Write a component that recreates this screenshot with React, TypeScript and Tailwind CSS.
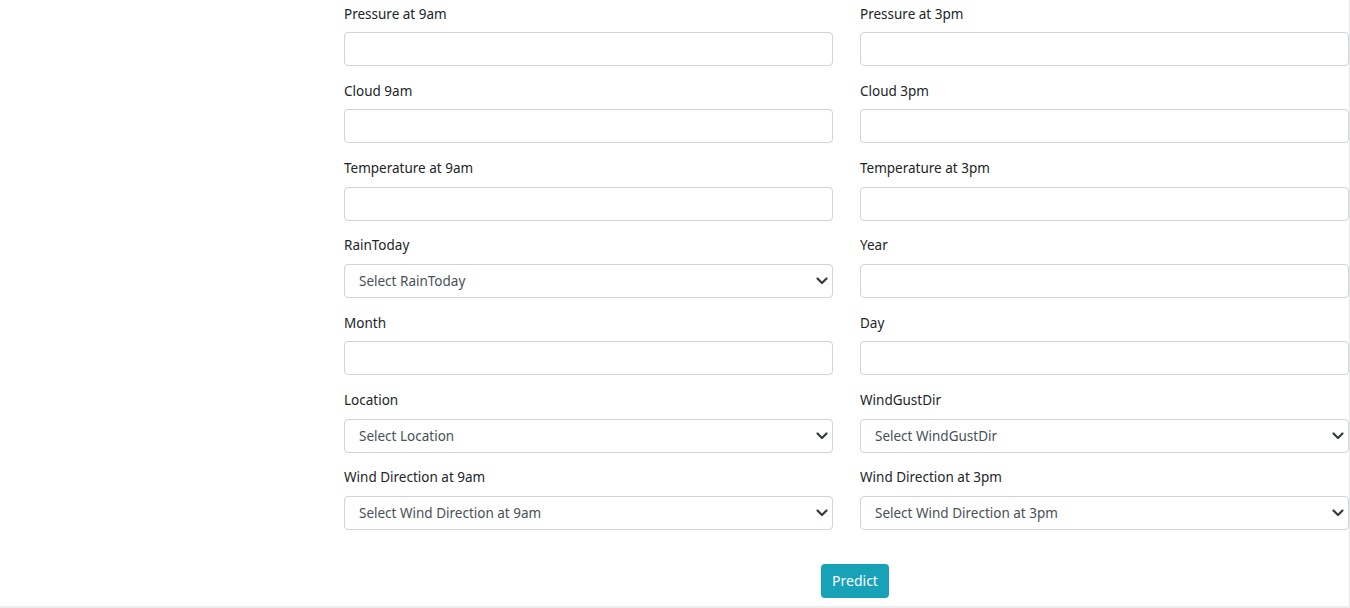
import React from "react";

type Field = { label: string; select?: string };

const rows: [Field, Field][] = [
  [{ label: "Pressure at 9am" }, { label: "Pressure at 3pm" }],
  [{ label: "Cloud 9am" }, { label: "Cloud 3pm" }],
  [{ label: "Temperature at 9am" }, { label: "Temperature at 3pm" }],
  [{ label: "RainToday", select: "Select RainToday" }, { label: "Year" }],
  [{ label: "Month" }, { label: "Day" }],
  [
    { label: "Location", select: "Select Location" },
    { label: "WindGustDir", select: "Select WindGustDir" },
  ],
  [
    { label: "Wind Direction at 9am", select: "Select Wind Direction at 9am" },
    { label: "Wind Direction at 3pm", select: "Select Wind Direction at 3pm" },
  ],
];

function FieldBox({ f }: { f: Field }) {
  return (
    <div className="flex flex-col">
      <label className="h-[21px] leading-[21px] text-[13.5px] text-[#212529] mb-[7.5px]">
        {f.label}
      </label>
      {f.select ? (
        <div className="relative h-[34px]">
          <div className="h-[34px] w-full border border-[#ced4da] rounded-[4px] bg-white pl-[14px] flex items-center text-[13.5px] text-[#495057]">
            {f.select}
          </div>
          <svg
            className="absolute right-[3px] top-[11px]"
            width="16"
            height="12"
            viewBox="0 0 16 12"
          >
            <path
              d="M3.5 3.5l4.5 4.5 4.5-4.5"
              fill="none"
              stroke="#343a40"
              strokeWidth="2.2"
              strokeLinecap="round"
              strokeLinejoin="round"
            />
          </svg>
        </div>
      ) : (
        <div className="h-[34px] w-full border border-[#ced4da] rounded-[4px] bg-white" />
      )}
    </div>
  );
}

export default function App() {
  return (
    <div
      className="w-[1350px] h-[608px] overflow-hidden bg-white flex flex-col"
      style={{ fontFamily: '"Noto Sans", "Open Sans", sans-serif' }}
    >
      <div className="flex-1 w-[1350px] border-r border-[#e6e6e6] overflow-hidden">
        <div className="pl-[344px] pt-[3.5px] w-[1349px]">
          <div className="grid grid-cols-[489px_489px] gap-x-[27px] gap-y-[14.84px]">
            {rows.map((r, i) => (
              <React.Fragment key={i}>
                <FieldBox f={r[0]} />
                <FieldBox f={r[1]} />
              </React.Fragment>
            ))}
          </div>
          <div className="mt-[34px] ml-[477px]">
            <button className="h-[34px] w-[68px] rounded-[4px] bg-[#17a2b8] text-white text-[14px] flex items-center justify-center">
              Predict
            </button>
          </div>
        </div>
      </div>
      <div className="h-[2px] bg-[#eeeeee] shrink-0" />
    </div>
  );
}
